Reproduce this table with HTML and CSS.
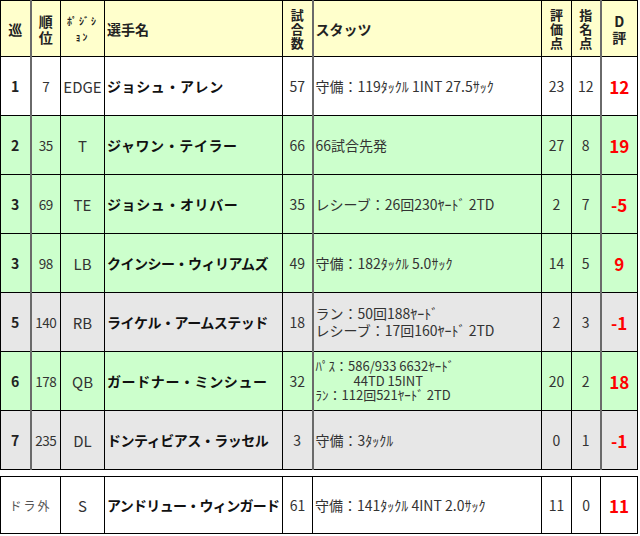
FILE: index.html
```html
<!DOCTYPE html>
<html lang="ja">
<head>
<meta charset="utf-8">
<title>ドラフト評価</title>
<link rel="stylesheet" href="styles.css">
</head>
<body>
<table class="draft main">
  <colgroup>
    <col class="c-round"><col class="c-rank"><col class="c-pos"><col class="c-name"><col class="c-games"><col class="c-stats"><col class="c-eval"><col class="c-pick"><col class="c-d">
  </colgroup>
  <thead>
    <tr class="head">
      <th class="center">巡</th>
      <th class="center dbl stack2">順<br>位</th>
      <th class="center pos-h">ﾎﾟｼﾞｼ<br>ｮﾝ</th>
      <th class="left">選手名</th>
      <th class="center stack3">試<br>合<br>数</th>
      <th class="left dbl">スタッツ</th>
      <th class="center stack3">評<br>価<br>点</th>
      <th class="center stack3">指<br>名<br>点</th>
      <th class="center dbl stack2">D<br>評</th>
    </tr>
  </thead>
  <tbody>
    <tr class="white">
      <td class="round">1</td><td class="rank dbl">7</td><td class="pos">EDGE</td><td class="name">ジョシュ・アレン</td><td class="num">57</td>
      <td class="stats dbl">守備：119ﾀｯｸﾙ 1INT 27.5ｻｯｸ</td><td class="num">23</td><td class="num">12</td><td class="dval dbl">12</td>
    </tr>
    <tr class="green">
      <td class="round">2</td><td class="rank dbl">35</td><td class="pos">T</td><td class="name">ジャワン・テイラー</td><td class="num">66</td>
      <td class="stats dbl">66試合先発</td><td class="num">27</td><td class="num">8</td><td class="dval dbl">19</td>
    </tr>
    <tr class="green">
      <td class="round">3</td><td class="rank dbl">69</td><td class="pos">TE</td><td class="name">ジョシュ・オリバー</td><td class="num">35</td>
      <td class="stats dbl">レシーブ：26回230ﾔｰﾄﾞ 2TD</td><td class="num">2</td><td class="num">7</td><td class="dval dbl">-5</td>
    </tr>
    <tr class="green">
      <td class="round">3</td><td class="rank dbl">98</td><td class="pos">LB</td><td class="name tight">クインシー・ウィリアムズ</td><td class="num">49</td>
      <td class="stats dbl">守備：182ﾀｯｸﾙ 5.0ｻｯｸ</td><td class="num">14</td><td class="num">5</td><td class="dval dbl">9</td>
    </tr>
    <tr class="gray">
      <td class="round">5</td><td class="rank dbl">140</td><td class="pos">RB</td><td class="name tight">ライケル・アームステッド</td><td class="num">18</td>
      <td class="stats dbl two">ラン：50回188ﾔｰﾄﾞ<br>レシーブ：17回160ﾔｰﾄﾞ 2TD</td><td class="num">2</td><td class="num">3</td><td class="dval dbl">-1</td>
    </tr>
    <tr class="green">
      <td class="round">6</td><td class="rank dbl">178</td><td class="pos">QB</td><td class="name">ガードナー・ミンシュー</td><td class="num">32</td>
      <td class="stats dbl three">ﾊﾟｽ：586/933 6632ﾔｰﾄﾞ<br><span class="indent">44TD 15INT</span><br>ﾗﾝ：112回521ﾔｰﾄﾞ 2TD</td><td class="num">20</td><td class="num">2</td><td class="dval dbl">18</td>
    </tr>
    <tr class="gray">
      <td class="round">7</td><td class="rank dbl">235</td><td class="pos">DL</td><td class="name tight">ドンティビアス・ラッセル</td><td class="num">3</td>
      <td class="stats dbl">守備：3ﾀｯｸﾙ</td><td class="num">0</td><td class="num">1</td><td class="dval dbl">-1</td>
    </tr>
  </tbody>
</table>
<table class="draft extra">
  <colgroup>
    <col class="c-round"><col class="c-rank"><col class="c-pos"><col class="c-name"><col class="c-games"><col class="c-stats"><col class="c-eval"><col class="c-pick"><col class="c-d">
  </colgroup>
  <tbody>
    <tr class="white">
      <td class="undrafted" colspan="2">ドラ外</td><td class="pos">S</td><td class="name tighter">アンドリュー・ウィンガード</td><td class="num">61</td>
      <td class="stats">守備：141ﾀｯｸﾙ 4INT 2.0ｻｯｸ</td><td class="num">11</td><td class="num">0</td><td class="dval">11</td>
    </tr>
  </tbody>
</table>
</body>
</html>
```
FILE: styles.css
```css
html, body {
  margin: 0;
  padding: 0;
  background: #ffffff;
}

body {
  font-family: "Noto Sans CJK JP", "Noto Sans", sans-serif;
  color: #333333;
}

.draft {
  border-collapse: collapse;
  table-layout: fixed;
  width: 637px;
}

.extra {
  margin-top: 6px;
}

.c-round { width: 30px; }
.c-rank { width: 30px; }
.c-pos { width: 44px; }
.c-name { width: 178px; }
.c-games { width: 30px; }
.c-stats { width: 229px; }
.c-eval { width: 30px; }
.c-pick { width: 29px; }
.c-d { width: 37px; }

.draft th,
.draft td {
  border: 1px solid #000000;
  padding: 0;
  overflow: hidden;
  white-space: nowrap;
}

.draft th.dbl,
.draft td.dbl {
  border-left: 2px solid #6a6a6a;
}

.head th {
  height: 55px;
  background: #ffffcc;
  font-weight: bold;
  font-size: 14px;
  line-height: 16px;
  color: #222222;
  vertical-align: middle;
}

.head .center { text-align: center; }
.head .left { text-align: left; padding-left: 2px; }

.head .stack2 {
  font-size: 14px;
  line-height: 16px;
}

.head .stack3 {
  font-size: 13px;
  line-height: 14px;
}

.head .pos-h {
  font-size: 10px;
  line-height: 16px;
  letter-spacing: 2px;
}

tbody tr { height: 59px; }
.extra tbody tr { height: 57px; }

.white td { background: #ffffff; }
.green td { background: #ccffcc; }
.gray td { background: #e7e7e7; }

.round {
  text-align: center;
  font-weight: bold;
  font-size: 14px;
  color: #222222;
}

.rank {
  text-align: center;
  font-size: 13.5px;
  letter-spacing: -0.5px;
}

.pos {
  text-align: center;
  font-size: 15px;
}

.name {
  font-weight: bold;
  font-size: 14px;
  color: #111111;
  padding-left: 2px !important;
  letter-spacing: 0.6px;
}

.name.tight {
  letter-spacing: -0.5px;
}

.name.tighter {
  letter-spacing: -0.7px;
}

.num {
  text-align: center;
  font-size: 14px;
}

.stats {
  font-size: 14px;
  padding-left: 2px !important;
  line-height: 17px;
}

.stats.three {
  font-size: 13px;
  line-height: 14.5px;
}

.indent {
  padding-left: 38px;
}

.dval {
  text-align: center;
  font-weight: bold;
  font-size: 17px;
  color: #ff0000;
}

.undrafted {
  text-align: center;
  font-size: 12px;
  letter-spacing: 2px;
  color: #555555;
}
```
